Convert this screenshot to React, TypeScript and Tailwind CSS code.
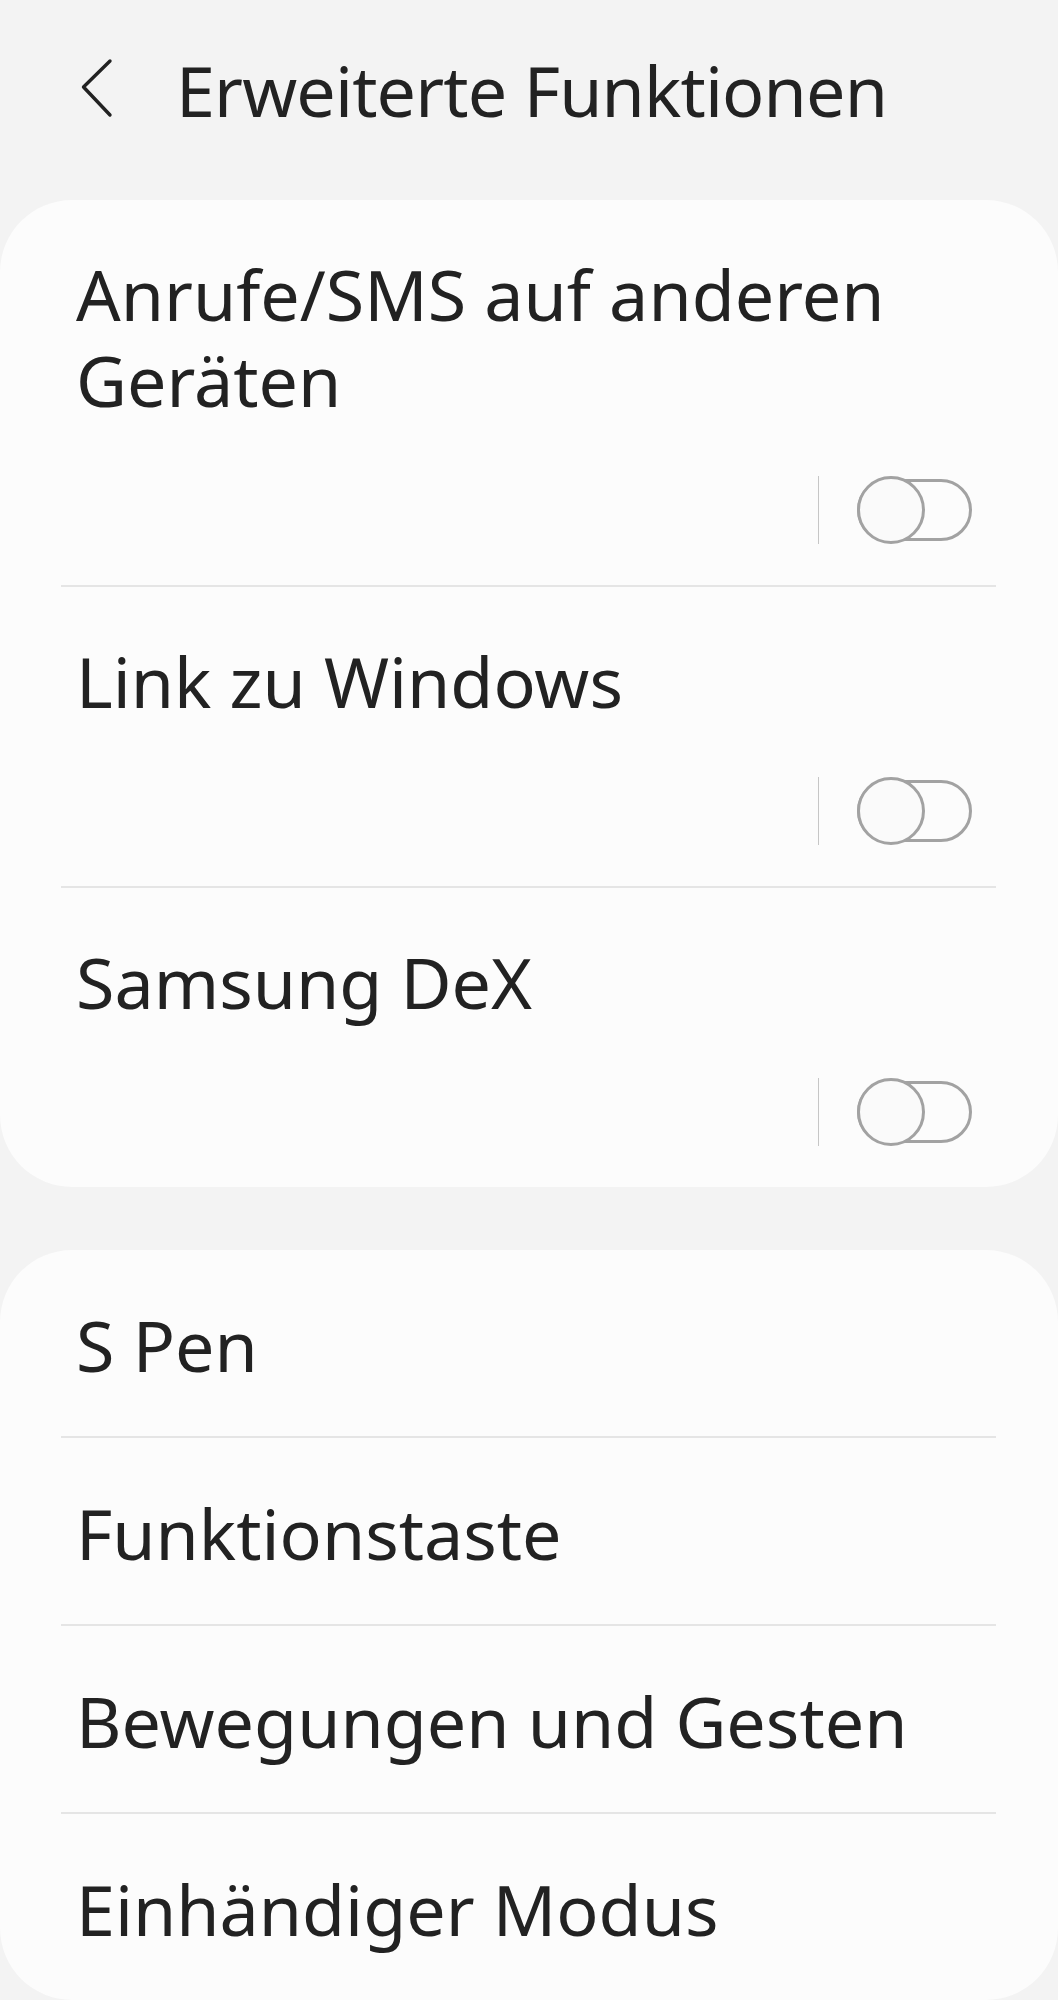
import React from "react";

const font = { fontFamily: '"Noto Sans", "Open Sans", sans-serif' };

function Toggle() {
  return (
    <div className="flex items-center h-[68px] pr-[86px]">
      <div className="w-px h-[68px] bg-[#c6c6c6]" />
      <div className="relative ml-[38px] w-[115px] h-[68px]">
        <div className="absolute left-0 top-[3px] w-[115px] h-[62px] rounded-full border-[3px] border-[#a2a2a2]" />
        <div className="absolute left-0 top-0 w-[68px] h-[68px] rounded-full border-[3px] border-[#a2a2a2] bg-[#fafafa]" />
      </div>
    </div>
  );
}

function Sep() {
  return <div className="ml-[61px] mr-[62px] h-[2px] bg-[#e5e5e5]" />;
}

function ToggleRow({ label }: { label: string }) {
  return (
    <div className="pt-[51px] pb-[41px]">
      <div className="pl-[76px] pr-[60px] text-[70px] leading-[86px] text-[#222222]">
        {label}
      </div>
      <div className="mt-[53px] flex justify-end">
        <Toggle />
      </div>
    </div>
  );
}

function NavRow({ label }: { label: string }) {
  return (
    <div className="h-[186px] pt-[52px] pl-[76px] text-[70px] leading-[86px] text-[#222222]">
      {label}
    </div>
  );
}

export default function App() {
  return (
    <div className="min-h-screen bg-[#f3f3f3]" style={font}>
      <div className="h-[200px] flex items-start pt-[47px] pl-[76px]">
        <svg
          className="mt-[10px] shrink-0"
          width="40"
          height="64"
          viewBox="0 0 40 64"
          fill="none"
          stroke="#222222"
          strokeWidth="3.4"
          strokeLinecap="round"
          strokeLinejoin="round"
        >
          <path d="M34 4 L7.5 30 L34 58" />
        </svg>
        <h1 className="ml-[60px] text-[70px] leading-[86px] tracking-[-0.85px] font-normal text-[#222222] whitespace-nowrap">
          Erweiterte Funktionen
        </h1>
      </div>

      <div className="rounded-[72px] bg-[#fcfcfc]">
        <ToggleRow label="Anrufe/SMS auf anderen Geräten" />
        <Sep />
        <ToggleRow label="Link zu Windows" />
        <Sep />
        <ToggleRow label="Samsung DeX" />
      </div>

      <div className="mt-[63px] rounded-[72px] bg-[#fcfcfc]">
        <NavRow label="S Pen" />
        <Sep />
        <NavRow label="Funktionstaste" />
        <Sep />
        <NavRow label="Bewegungen und Gesten" />
        <Sep />
        <NavRow label="Einhändiger Modus" />
      </div>
    </div>
  );
}
